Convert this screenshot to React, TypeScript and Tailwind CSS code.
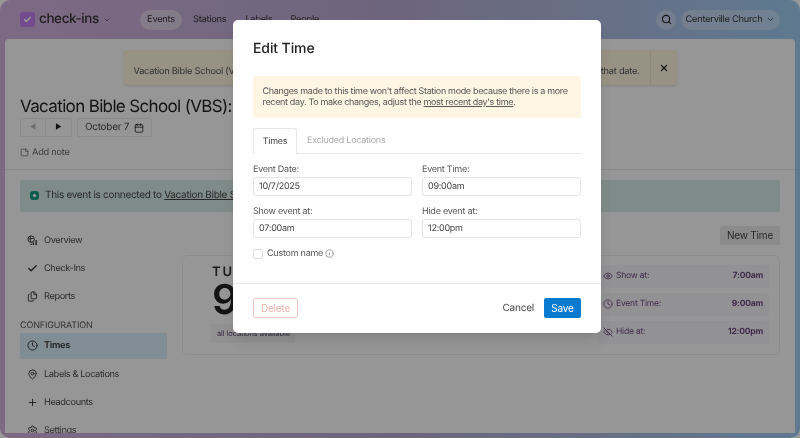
import { Calendar, Check, ChevronDown, Clock, Eye, EyeOff, Files, Info, MapPin, Plus, Search, Settings, StickyNote, X, type LucideIcon } from "lucide-react"

const fields = [
  { label: "Event Date:", value: "10/7/2025" },
  { label: "Event Time:", value: "09:00am" },
  { label: "Show event at:", value: "07:00am" },
  { label: "Hide event at:", value: "12:00pm" },
]

const timeRows = [
  { icon: Eye, label: "Show at:", value: "7:00am" },
  { icon: Clock, label: "Event Time:", value: "9:00am" },
  { icon: EyeOff, label: "Hide at:", value: "12:00pm" },
]

// globe with a small bar chart, lucide has nothing close
function OverviewIcon({ className }: { className?: string }) {
  return (
    <svg viewBox="0 0 24 24" fill="none" stroke="currentColor" strokeWidth="2" className={className}>
      <circle cx="9" cy="9" r="7" />
      <path d="M9 2c-3 3-3 9 0 14M3 7c3 2 8 2 11-1" />
      <path d="M9 22v-3M14 22v-6M20 22V11" strokeWidth="3" />
    </svg>
  )
}

function NavRow({ icon: Icon, label, thick }: { icon: LucideIcon | typeof OverviewIcon; label: string; thick?: boolean }) {
  return (
    <div className="flex h-7 items-center gap-[6px] pl-[7px] text-[9.25px] tracking-[-0.4px] text-[#4a4a4a]">
      <Icon className="h-[11px] w-[11px] shrink-0 text-[#333]" {...(thick ? { strokeWidth: 3 } : {})} />
      <span>{label}</span>
    </div>
  )
}

function Page() {
  return (
    <div className="flex h-[438px] w-[800px] flex-col overflow-hidden rounded-[10px] bg-gradient-to-r from-[#d3b0dc] via-[#b5a9d0] to-[#9ecbf0] px-[5px] pb-[5px]">
      <header className="flex h-[39px] shrink-0 items-center px-[15px]">
        <div className="flex h-[15px] w-[15px] items-center justify-center rounded-[3px] bg-[#c07ced]">
          <Check className="h-[9px] w-[9px] text-white" strokeWidth={4} />
        </div>
        <span className="ml-[4px] w-[60px] text-[13.5px] font-medium tracking-[-0.4px] text-[#333]">check-ins</span>
        <ChevronDown className="ml-[4px] h-[8px] w-[8px] text-[#444]" />
        <nav className="ml-[29px] flex items-center text-[9.25px] tracking-[-0.25px] text-[#333]">
          <span className="flex h-[20px] w-[42px] items-center justify-center rounded-full bg-white/40">Events</span>
          <span className="ml-[11px]">Stations</span>
          <span className="ml-[19px]">Labels</span>
          <span className="ml-[18px]">People</span>
        </nav>
        <div className="ml-auto flex h-5 w-5 items-center justify-center rounded-full bg-white/30">
          <Search className="h-[11px] w-[11px] text-[#222]" strokeWidth={2.5} />
        </div>
        <div className="ml-[5px] flex h-5 w-[99px] items-center justify-center gap-[4px] rounded-full bg-white/30 text-[9.25px] tracking-[-0.25px] text-[#333]">
          Centerville Church
          <ChevronDown className="h-[9px] w-[9px]" />
        </div>
      </header>
      <main className="min-h-0 flex-1 overflow-hidden rounded-t-[4px] bg-[#fbfbfb]">
        <div className="flex justify-center pt-[11px]">
          <div className="flex h-[35px] w-[553px] items-center justify-between rounded-[2px] bg-[#fdf3dc] pl-[10px] text-[9.25px] tracking-[-0.25px] text-[#555] shadow-sm">
            <span className="pt-[9px]">Vacation Bible School (VBS)</span>
            <div className="flex items-center">
              <span className="pr-[10px] pt-[9px]">that date.</span>
              <div className="flex h-[35px] w-[27px] items-center justify-center border-l border-[#eee2c8]">
                <X className="h-[10px] w-[10px] text-[#222]" strokeWidth={3} />
              </div>
            </div>
          </div>
        </div>
        <div className="px-[15px]">
          <h1 className="mt-[10px] text-[17px] leading-[24px] tracking-[-0.65px] text-[#222]">Vacation Bible School (VBS):</h1>
          <div className="-mt-[1px] flex gap-[5px]">
            <div className="flex h-[19px] overflow-hidden rounded-[2px] border border-[#e8e8e8]">
              <span className="flex w-[25px] items-center justify-center border-r border-[#e8e8e8] text-[7px] text-[#bbb]">◀</span>
              <span className="flex w-[25px] items-center justify-center text-[7px] text-[#222]">▶</span>
            </div>
            <div className="flex h-[19px] w-[75px] items-center justify-center gap-[5px] rounded-[2px] border border-[#e8e8e8] text-[10px] tracking-[-0.3px] text-[#444]">
              October 7
              <Calendar className="h-[10px] w-[10px] text-[#222]" strokeWidth={2} />
            </div>
          </div>
          <div className="mt-[9px] flex items-center gap-[3px] text-[9.25px] tracking-[-0.25px] text-[#666]">
            <StickyNote className="h-[9px] w-[9px]" />
            Add note
          </div>
        </div>
        <div className="mt-[9px] border-t border-[#e8e8e8] px-[15px] pt-[10px]">
          <div className="flex h-[32px] items-center gap-[6px] rounded-[2px] bg-[#d4e8e3] pl-[10px] text-[10px] tracking-[-0.3px] text-[#444]">
            <span className="flex h-[9px] w-[9px] items-center justify-center rounded-[3px] bg-[#1a9b84]">
              <span className="h-[3px] w-[3px] rotate-45 bg-white" />
            </span>
            <span>
              This event is connected to <span className="underline">Vacation Bible School</span>
            </span>
          </div>
          <div className="mt-[14px] flex gap-[15px]">
            <aside className="w-[147px] shrink-0 pt-[1px]">
              <NavRow icon={OverviewIcon} label="Overview" />
              <NavRow icon={Check} label="Check-Ins" thick />
              <NavRow icon={Files} label="Reports" />
              <div className="mt-[9px] text-[9px] leading-[12px] tracking-[-0.15px] text-[#555]">CONFIGURATION</div>
              <div className="mt-[1px] flex h-[26px] items-center gap-[6px] rounded-[2px] bg-[#d7ebf7] pl-[7px] text-[9.25px] font-semibold tracking-[-0.3px] text-[#333]">
                <Clock className="h-[11px] w-[11px]" />
                Times
              </div>
              <div className="pt-[2px]">
                <NavRow icon={MapPin} label="Labels & Locations" />
                <NavRow icon={Plus} label="Headcounts" />
                <NavRow icon={Settings} label="Settings" />
              </div>
            </aside>
            <section className="min-w-0 flex-1">
              <div className="flex justify-end">
                <button className="flex h-[19px] w-[60px] items-center justify-center rounded-[2px] bg-[#e8e8e8] text-[10px] tracking-[-0.2px] text-[#444]">New Time</button>
              </div>
              <div className="mt-[10px] flex h-[100px] items-start justify-between rounded-[5px] border border-[#eaeaea] pl-[29px] pr-[10px]">
                <div className="flex flex-col items-start pt-[9px]">
                  <span className="text-[13px] font-semibold leading-[14px] tracking-[2px] text-[#333]">TUE</span>
                  <span className="mt-[3px] text-[41px] font-semibold leading-[34px] text-[#222]">9</span>
                  <span className="-ml-[1px] mt-[8px] flex h-[19px] items-center rounded-[2px] bg-[#f2f2f2] pl-[6px] pr-[5px] pt-[1px] text-[7.5px] tracking-[-0.1px] text-[#5a4a70]">all locations available</span>
                </div>
                <div className="mt-[9px] flex w-[172px] flex-col gap-[5px]">
                  {timeRows.map(row => (
                    <div key={row.label} className="flex h-[23px] items-center justify-between rounded-[2px] bg-[#f4f2f6] px-[6px] text-[8.5px] tracking-[-0.2px] text-[#6b4a80]">
                      <span className="flex items-center gap-[3px]">
                        <row.icon className="h-[10px] w-[10px]" />
                        {row.label}
                      </span>
                      <span className="font-bold">{row.value}</span>
                    </div>
                  ))}
                </div>
              </div>
            </section>
          </div>
        </div>
      </main>
    </div>
  )
}

function EditTimeModal() {
  return (
    <div className="absolute left-[233px] top-[20px] flex h-[313px] w-[368px] flex-col rounded-[5px] bg-white shadow-lg">
      <div className="flex-1 px-[20px]">
        <h2 className="pt-[19px] text-[14px] font-medium leading-[20px] tracking-[-0.1px] text-[#222]">Edit Time</h2>
        <div className="mt-[17px] h-[42px] rounded-[3px] bg-[#fef5e3] px-[9.5px] pt-[9.5px] text-[9px] leading-[11.5px] tracking-[-0.33px] text-[#555]">
          Changes made to this time won't affect Station mode because there is a more recent day. To make changes, adjust the <span className="underline">most recent day's time</span>.
        </div>
        <div className="mt-[10px] flex h-[26px] items-stretch border-b border-[#e6e6e6] text-[9px] tracking-[-0.25px]">
          <div className="-mb-px flex w-[44px] items-center justify-center rounded-t-[3px] border border-[#e6e6e6] border-b-white bg-white pt-[1px] text-[#444]">Times</div>
          <div className="flex items-center pl-[10px] pt-[1px] text-[#aaa]">Excluded Locations</div>
        </div>
        <div className="mt-[9px] grid grid-cols-2 gap-x-[10px] gap-y-[9px]">
          {fields.map(field => (
            <label key={field.label} className="block">
              <span className="block text-[9px] leading-[13px] tracking-[-0.25px] text-[#555]">{field.label}</span>
              <span className="mt-[1px] flex h-[19px] items-center rounded-[3px] border border-[#e4e4e4] px-[5px] text-[9px] tracking-[-0.25px] text-[#444]">{field.value}</span>
            </label>
          ))}
        </div>
        <div className="mt-[9px] flex items-center gap-[4px] text-[9px] tracking-[-0.25px] text-[#555]">
          <span className="h-[10px] w-[10px] rounded-[2px] border border-[#ddd]" />
          Custom name
          <Info className="-ml-[2px] h-[9px] w-[9px] text-[#888]" />
        </div>
      </div>
      <div className="flex h-[50px] items-center justify-between border-t border-[#e8e8e8] px-[20px] pb-[1px]">
        <button className="flex h-[20px] w-[45px] items-center justify-center rounded-[2px] border border-[#f3c9c3] text-[10px] tracking-[-0.2px] text-[#efb3aa]">Delete</button>
        <div className="flex items-center gap-[10px]">
          <span className="text-[10px] tracking-[-0.2px] text-[#444]">Cancel</span>
          <button className="flex h-[20px] w-[37px] items-center justify-center rounded-[2px] bg-[#0a7bd1] text-[10px] tracking-[-0.2px] text-white">Save</button>
        </div>
      </div>
    </div>
  )
}

export default function App() {
  return (
    <div className="relative h-[438px] w-[800px] overflow-hidden bg-white font-['Inter',sans-serif] [text-rendering:geometricPrecision] blur-[0.4px]">
      <Page />
      <div className="absolute inset-0 bg-black/40" />
      <EditTimeModal />
    </div>
  )
}
